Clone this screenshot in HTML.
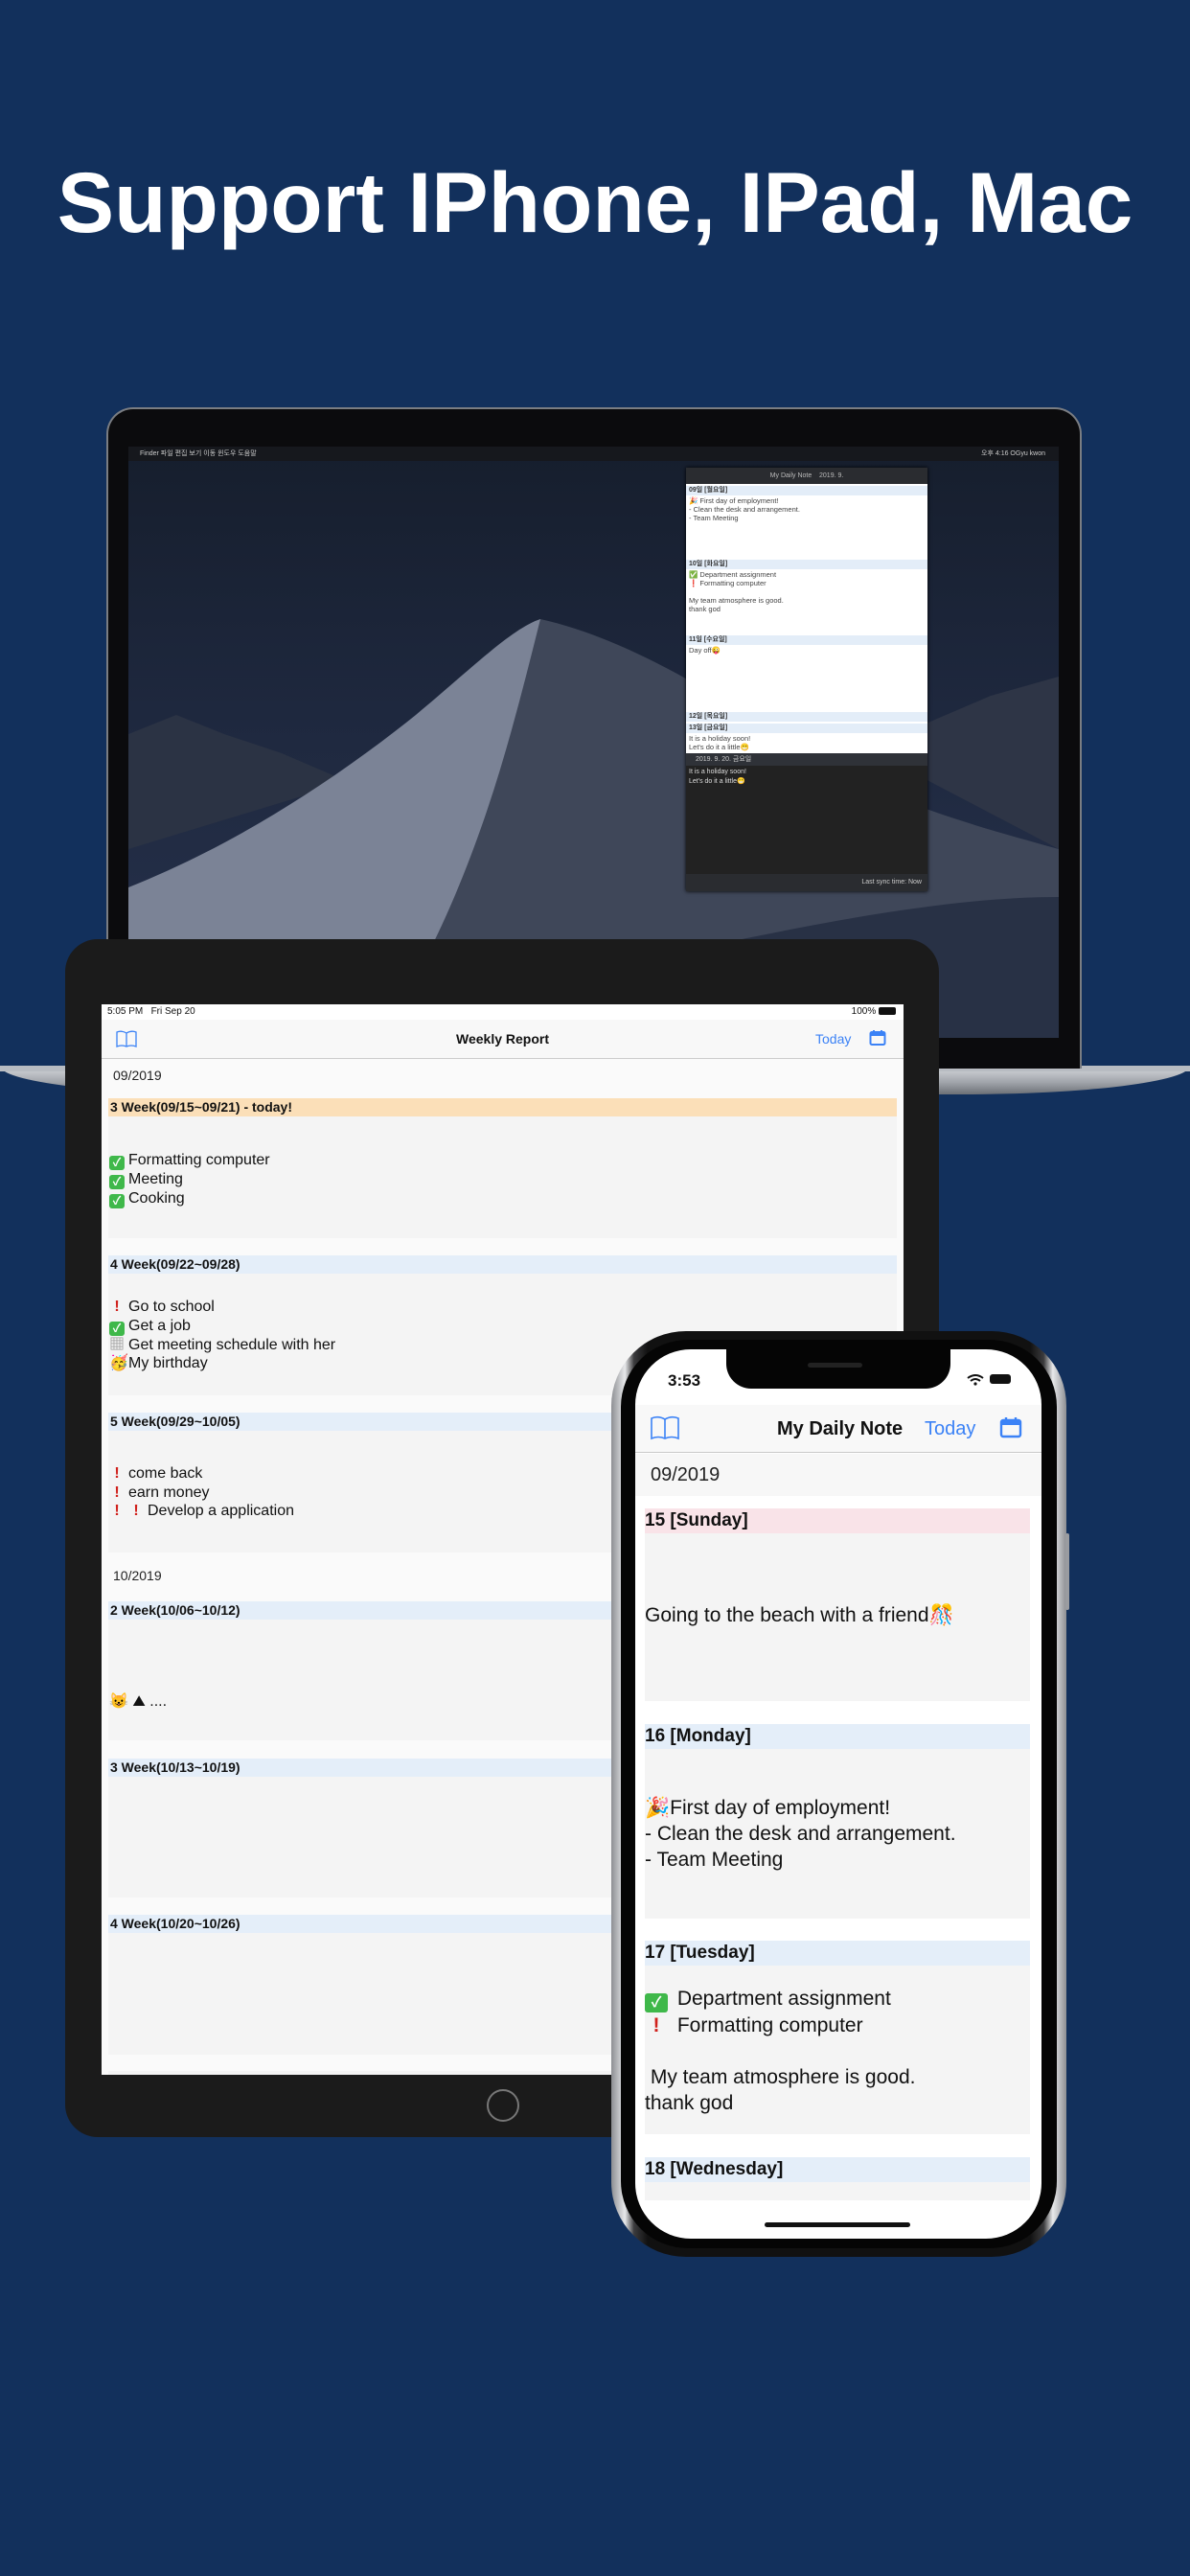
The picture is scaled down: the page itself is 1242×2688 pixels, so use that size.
<!DOCTYPE html>
<html><head><meta charset="utf-8"><style>
*{margin:0;padding:0;box-sizing:border-box}
body{width:1242px;height:2688px;background:#12305c;position:relative;overflow:hidden;font-family:"Liberation Sans","Noto Sans CJK KR",sans-serif}
.a{position:absolute}
h1{position:absolute;left:0;width:1242px;top:160px;text-align:center;color:#fff;font-size:89px;font-weight:bold;letter-spacing:0px}
.mh{position:absolute;left:0;right:0;height:10px;background:#e3edf8;font-size:7px;font-weight:bold;color:#333;padding-left:3px;line-height:10px}
.mt{position:absolute;left:3px;font-size:7.5px;color:#444;line-height:9px}
.ih{position:absolute;left:7px;right:7px;height:19px;background:#e4eef9;font-size:14px;font-weight:bold;color:#111;line-height:19px;padding-left:2px}
.ic{position:absolute;left:7px;right:7px;background:#f4f4f4}
.it{position:absolute;left:8px;font-size:16px;color:#111;line-height:19.5px}
.ph{position:absolute;left:10px;right:12px;height:26px;background:#e4eef9;font-size:19px;font-weight:bold;color:#111;line-height:26px}
.pc{position:absolute;left:10px;right:12px;background:#f4f4f4}
.pt{position:absolute;left:10px;font-size:21px;color:#111;line-height:27px;white-space:nowrap}
.ck{display:inline-block;width:16px;height:15px;background:#3fb84a;border-radius:3px;color:#fff;font-size:12px;line-height:15px;text-align:center;vertical-align:-2px;margin-right:4px;font-weight:bold}
.ex{display:inline-block;width:16px;color:#d0211c;font-weight:bold;text-align:center;margin-right:4px}
</style></head><body>
<h1>Support IPhone, IPad, Mac</h1>

<!-- Mac base -->
<div class="a" style="left:0;top:1112px;width:1242px;height:30px;border-radius:0 0 240px 240px/0 0 30px 30px;background:linear-gradient(#d8dade,#9ea2a8 60%,#6c7076)"></div>
<div class="a" style="left:0;top:1112px;width:1242px;height:6px;background:#b8bcc2"></div>
<!-- Mac bezel -->
<div class="a" style="left:111px;top:425px;width:1018px;height:690px;background:#0b0b0d;border-radius:28px 28px 0 0;border:2px solid #7a7d82;border-bottom:none"></div>
<div class="a" style="left:134px;top:466px;width:971px;height:617px;overflow:hidden;background:linear-gradient(#161e2d,#1f2940 50%,#27324c)">
 <svg class="a" style="left:0;top:0" width="971" height="617" viewBox="0 0 971 617">
  <path d="M0 300 L50 280 L100 300 L160 320 L230 350 L0 420Z" fill="#2b3344"/>
  <path d="M780 320 L830 290 L900 260 L971 240 L971 420 Z" fill="#2e3546"/>
  <path d="M0 617 L0 480 C100 440 220 380 330 270 C370 230 400 190 430 180 C520 200 620 260 720 330 C820 380 900 400 971 420 L971 617Z" fill="#3f4759"/>
  <path d="M0 617 L0 460 C100 420 200 360 300 280 C360 230 400 190 430 180 C410 260 390 340 360 420 C330 500 300 560 260 617Z" fill="#7b8396"/>
  <path d="M0 617 C200 600 380 570 520 540 C700 500 850 470 971 470 L971 617Z" fill="#283145"/>
 </svg>
 <div class="a" style="left:0;top:0;width:971px;height:15px;background:#16181d;color:#ccc;font-size:7px;line-height:15px;padding-left:12px">  Finder  파일  편집  보기  이동  윈도우  도움말<span style="position:absolute;right:14px">오후 4:16  OGyu kwon</span></div>
 <!-- popup -->
 <div class="a" style="left:582px;top:22px;width:252px;height:442px;background:#222;box-shadow:0 0 4px #000">
  <div class="a" style="left:0;top:0;width:252px;height:17px;background:#2a2c30;color:#bbb;font-size:7px;line-height:17px;text-align:center">My Daily Note&nbsp;&nbsp;&nbsp;&nbsp;2019. 9.</div>
  <div class="a" style="left:0;top:17px;width:252px;height:281px;background:#fff">
   <div class="mh" style="top:2px">09일 [월요일]</div>
   <div class="mt" style="top:13px">🎉 First day of employment!<br>- Clean the desk and arrangement.<br>- Team Meeting</div>
   <div class="mh" style="top:79px">10일 [화요일]</div>
   <div class="mt" style="top:90px">✅ Department assignment<br>❗ Formatting computer<br><br>My team atmosphere is good.<br>thank god</div>
   <div class="mh" style="top:158px">11일 [수요일]</div>
   <div class="mt" style="top:169px">Day off😜</div>
   <div class="mh" style="top:238px">12일 [목요일]</div>
   <div class="mh" style="top:250px">13일 [금요일]</div>
   <div class="mt" style="top:261px">It is a holiday soon!<br>Let's do it a little😁</div>
  </div>
  <div class="a" style="left:0;top:298px;width:252px;height:13px;background:#2f3238;color:#ccc;font-size:7px;line-height:13px;padding-left:10px">2019. 9. 20. 금요일</div>
  <div class="a" style="left:3px;top:313px;color:#ddd;font-size:7px;line-height:10px">It is a holiday soon!<br>Let's do it a little😁</div>
  <div class="a" style="left:0;top:424px;width:252px;height:18px;background:#2a2c30;color:#ccc;font-size:7px;line-height:18px;text-align:right;padding-right:6px">Last sync time: Now</div>
 </div>
</div>

<!-- iPad -->
<div class="a" style="left:68px;top:980px;width:912px;height:1250px;background:#1b1b1b;border-radius:34px"></div>
<div class="a" style="left:508px;top:2180px;width:34px;height:34px;border:2px solid #777;border-radius:50%"></div>
<div class="a" style="left:106px;top:1048px;width:837px;height:1117px;background:#fafafa;overflow:hidden">
 <div class="a" style="left:0;top:0;width:837px;height:16px;background:#fff;font-size:10px;line-height:16px;padding-left:6px;color:#111">5:05 PM&nbsp;&nbsp;&nbsp;Fri Sep 20<span style="position:absolute;right:8px">100% <span style="display:inline-block;width:18px;height:8px;background:#111;border-radius:2px;vertical-align:-1px"></span></span></div>
 <div class="a" style="left:0;top:16px;width:837px;height:41px;background:#f8f8f8;border-bottom:1px solid #ccc">
  <svg class="a" style="left:15px;top:11px" width="22" height="18" viewBox="0 0 22 18"><path d="M1 2 Q6 0 11 3 Q16 0 21 2 V17 Q16 15 11 17 Q6 15 1 17 Z M11 3 V17" fill="none" stroke="#3b82f6" stroke-width="1.3"/></svg>
  <div class="a" style="left:0;width:837px;top:12px;text-align:center;font-size:14px;font-weight:bold;color:#111">Weekly Report</div>
  <div class="a" style="left:745px;top:12px;font-size:14px;color:#3b82f6">Today</div>
  <svg class="a" style="left:801px;top:10px" width="18" height="18" viewBox="0 0 18 18"><rect x="1.5" y="3" width="15" height="13" rx="1.5" fill="none" stroke="#3b82f6" stroke-width="2"/><rect x="1.5" y="3" width="15" height="4" fill="#3b82f6"/><path d="M5 1v4M13 1v4" stroke="#3b82f6" stroke-width="2"/></svg>
 </div>
 <div class="a" style="left:12px;top:66px;font-size:14px;color:#222">09/2019</div>
 <div class="ic" style="top:98px;height:146px"></div>
 <div class="ih" style="top:98px;background:#fbdfb8">3 Week(09/15~09/21) - today!</div>
 <div class="it" style="top:153px"><span class="ck">✓</span>Formatting computer<br><span class="ck">✓</span>Meeting<br><span class="ck">✓</span>Cooking</div>
 <div class="ic" style="top:262px;height:146px"></div>
 <div class="ih" style="top:262px">4 Week(09/22~09/28)</div>
 <div class="it" style="top:306px"><span class="ex">!</span>Go to school<br><span class="ck">✓</span>Get a job<br><span class="ex" style="color:#999">▦</span>Get meeting schedule with her<br><span class="ex">🥳</span>My birthday</div>
 <div class="ic" style="top:426px;height:146px"></div>
 <div class="ih" style="top:426px">5 Week(09/29~10/05)</div>
 <div class="it" style="top:480px"><span class="ex">!</span>come back<br><span class="ex">!</span>earn money<br><span class="ex">!</span><span class="ex">!</span>Develop a application</div>
 <div class="a" style="left:12px;top:588px;font-size:14px;color:#222">10/2019</div>
 <div class="ic" style="top:623px;height:145px"></div>
 <div class="ih" style="top:623px">2 Week(10/06~10/12)</div>
 <div class="it" style="top:718px">😺 ⛰ ....</div>
 <div class="ic" style="top:787px;height:145px"></div>
 <div class="ih" style="top:787px">3 Week(10/13~10/19)</div>
 <div class="ic" style="top:950px;height:146px"></div>
 <div class="ih" style="top:950px">4 Week(10/20~10/26)</div>
 <div class="ic" style="top:1113px;height:10px"></div>
</div>

<!-- iPhone -->
<div class="a" style="left:638px;top:1389px;width:475px;height:966px;border-radius:78px;background:linear-gradient(90deg,#8d8f93,#e8e9eb 3%,#3a3a3c 5%,#111 8%,#111 92%,#3a3a3c 95%,#e8e9eb 97%,#8d8f93)"></div>
<div class="a" style="left:648px;top:1398px;width:455px;height:948px;border-radius:70px;background:#050505"></div>
<div class="a" style="left:1112px;top:1600px;width:4px;height:80px;background:#9a9ca0;border-radius:2px"></div>
<div class="a" style="left:663px;top:1408px;width:424px;height:928px;border-radius:58px;background:#fff;overflow:hidden">
 <div class="a" style="left:95px;top:-2px;width:234px;height:43px;background:#050505;border-radius:0 0 26px 26px"></div>
 <div class="a" style="left:180px;top:14px;width:57px;height:5px;background:#222;border-radius:3px"></div>
 <div class="a" style="left:34px;top:23px;font-size:17px;font-weight:bold;color:#111">3:53</div>
 <svg class="a" style="left:346px;top:26px" width="18" height="12" viewBox="0 0 18 12"><path d="M1 4 Q9 -2 17 4 M4 7 Q9 3 14 7" fill="none" stroke="#111" stroke-width="2"/><circle cx="9" cy="10" r="1.6" fill="#111"/></svg>
 <div class="a" style="left:370px;top:26px;width:22px;height:10px;background:#111;border-radius:3px"></div>
 <div class="a" style="left:0;top:58px;width:424px;height:50px;background:#f8f8f8;border-bottom:1px solid #c9c9c9">
  <svg class="a" style="left:16px;top:11px" width="30" height="26" viewBox="0 0 30 26"><path d="M1 3 Q8 0 15 4 Q22 0 29 3 V24 Q22 21 15 24 Q8 21 1 24 Z M15 4 V24" fill="none" stroke="#3b82f6" stroke-width="1.6"/></svg>
  <div class="a" style="left:148px;top:14px;font-size:20px;font-weight:bold;color:#111">My Daily Note</div>
  <div class="a" style="left:302px;top:14px;font-size:20px;color:#3b82f6">Today</div>
  <svg class="a" style="left:380px;top:12px" width="24" height="24" viewBox="0 0 24 24"><rect x="2" y="4" width="20" height="17" rx="2" fill="none" stroke="#3b82f6" stroke-width="2.4"/><rect x="2" y="4" width="20" height="5" fill="#3b82f6"/><path d="M7 1v5M17 1v5" stroke="#3b82f6" stroke-width="2.4"/></svg>
 </div>
 <div class="a" style="left:0;top:109px;width:424px;height:44px;background:#f7f7f7"></div>
 <div class="a" style="left:16px;top:120px;font-size:20px;color:#222">09/2019</div>
 <div class="pc" style="top:166px;height:201px"></div>
 <div class="ph" style="top:166px;background:#f9e3e8">15 [Sunday]</div>
 <div class="pt" style="top:264px">Going to the beach with a friend🎊</div>
 <div class="pc" style="top:391px;height:203px"></div>
 <div class="ph" style="top:391px">16 [Monday]</div>
 <div class="pt" style="top:465px">🎉First day of employment!<br>- Clean the desk and arrangement.<br>- Team Meeting</div>
 <div class="pc" style="top:617px;height:202px"></div>
 <div class="ph" style="top:617px">17 [Tuesday]</div>
 <div class="pt" style="top:664px"><span class="ck" style="width:24px;height:20px;line-height:20px;font-size:15px">✓</span> Department assignment<br><span class="ex" style="width:24px">!</span> Formatting computer<br><br>&nbsp;My team atmosphere is good.<br>thank god</div>
 <div class="pc" style="top:843px;height:45px"></div>
 <div class="ph" style="top:843px">18 [Wednesday]</div>
 <div class="a" style="left:135px;top:911px;width:152px;height:5px;background:#111;border-radius:3px"></div>
</div>
</body></html>
